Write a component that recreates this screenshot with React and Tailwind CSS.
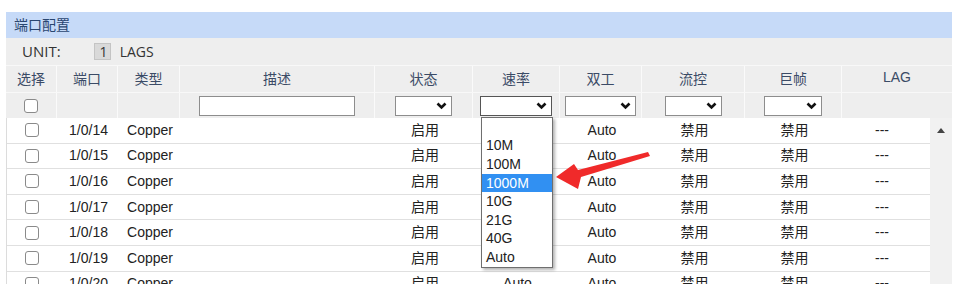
import React from "react";

const FONT = { fontFamily: '"Liberation Sans", "Noto Sans CJK SC", sans-serif' };
const HEAD_COLS = "51px 61px 62px 195px 98px 87px 82px 103px 97px 110px";
const BODY_COLS = "51px 61px 62px 195px 98px 87px 82px 103px 97px 88px";

function Check() {
  return <div className="w-[14px] h-[14px] rounded-[3px] border border-[#8a8a8a] bg-white" />;
}

function Chevron() {
  return (
    <svg width="11" height="8" viewBox="0 0 11 8" className="shrink-0">
      <polyline points="1.5,1.5 5.5,5.5 9.5,1.5" fill="none" stroke="#111" strokeWidth="2.6" />
    </svg>
  );
}

function Select({ w = 57, dark = false }) {
  return (
    <div
      className={`h-[20px] bg-white border flex items-center justify-end pr-[4px] ${dark ? "border-[#555]" : "border-[#8d8d8d]"}`}
      style={{ width: w }}
    >
      <Chevron />
    </div>
  );
}

const rows = ["1/0/14", "1/0/15", "1/0/16", "1/0/17", "1/0/18", "1/0/19", "1/0/20"];
const options = ["", "10M", "100M", "1000M", "10G", "21G", "40G", "Auto"];

export default function App() {
  return (
    <div className="w-[960px] h-[284px] overflow-hidden bg-white relative pt-[12px] pl-[6px]" style={FONT}>
      <div className="w-[946px]">
        {/* title */}
        <div className="h-[26px] bg-[#c6daf8] pl-[8px] flex items-center text-[14px] text-[#2a4670]">端口配置</div>
        {/* unit row */}
        <div className="h-[27px] bg-[#eeeeee] flex items-center pl-[16px] text-[15px] text-[#333]" style={{ fontFamily: '"Open Sans", "Liberation Sans", sans-serif' }}>
          <span>UNIT:</span>
          <span className="ml-[33px] w-[17px] h-[17px] bg-[#d9d9d9] border border-[#c4c4c4] flex items-center justify-end pr-[2px] text-[14px] leading-none">1</span>
          <span className="ml-[9px] text-[14px]">LAGS</span>
        </div>
        {/* header row */}
        <div className="grid h-[27px] bg-[#eeeeee] border-t border-[#f8f8f8] text-[14px] text-[#3b4b66]" style={{ gridTemplateColumns: HEAD_COLS }}>
          {["选择", "端口", "类型", "描述", "状态", "速率", "双工", "流控", "巨帧", "LAG"].map((h, i) => (
            <div key={h} className={`flex items-center justify-center ${i < 9 ? "border-r border-[#fafafa]" : ""} ${h === "LAG" ? "pb-[4px]" : ""}`}>
              {h}
            </div>
          ))}
        </div>
        {/* filter row */}
        <div className="grid h-[26px] bg-[#eeeeee] border-t border-[#f8f8f8]" style={{ gridTemplateColumns: HEAD_COLS }}>
          <div className="flex items-center justify-center border-r border-[#fafafa]"><Check /></div>
          <div className="border-r border-[#fafafa]" />
          <div className="border-r border-[#fafafa]" />
          <div className="flex items-center justify-center border-r border-[#fafafa]">
            <div className="w-[156px] h-[20px] bg-white border border-[#8d8d8d]" />
          </div>
          <div className="flex items-center justify-center border-r border-[#fafafa]"><Select /></div>
          <div className="flex items-center justify-center border-r border-[#fafafa] relative">
            <Select w={72} dark />
            <div className="absolute left-[8px] top-[24px] w-[72px] h-[151px] bg-white border border-[#6f6f6f] shadow-[2px_2px_3px_rgba(0,0,0,0.3)] z-10 text-[14px] text-[#222]">
              {options.map((o, i) => (
                <div
                  key={i}
                  className={`h-[18.6px] flex items-center pl-[4px] ${o === "1000M" ? "bg-[#3190f2] text-white" : ""}`}
                >
                  {o}
                </div>
              ))}
            </div>
          </div>
          <div className="flex items-center justify-center border-r border-[#fafafa]"><Select w={71} /></div>
          <div className="flex items-center justify-center border-r border-[#fafafa]"><Select /></div>
          <div className="flex items-center justify-center border-r border-[#fafafa]"><Select w={58} /></div>
          <div />
        </div>
        {/* body */}
        <div className="flex">
          <div className="w-[924px] border-l border-[#dcdcdc]">
            {rows.map((p, idx) => (
              <div key={p} className="grid h-[25.6px] border-b border-[#e0e0e0] text-[14px] text-[#222] bg-white" style={{ gridTemplateColumns: BODY_COLS }}>
                <div className="flex items-center justify-center -ml-[1px]"><Check /></div>
                <div className="flex items-center justify-center">{p}</div>
                <div className="flex items-center justify-center">Copper</div>
                <div />
                <div className="flex items-center justify-center">启用</div>
                <div className="flex items-center justify-center">{idx === 6 ? "Auto" : ""}</div>
                <div className="flex items-center justify-center">Auto</div>
                <div className="flex items-center justify-center">禁用</div>
                <div className="flex items-center justify-center">禁用</div>
                <div className="flex items-center justify-center pr-[10px]">---</div>
              </div>
            ))}
          </div>
          <div className="w-[22px] bg-[#f1f1f1] flex justify-center pt-[10px]">
            <svg width="8" height="5" viewBox="0 0 8 5"><polygon points="0,5 4,0 8,5" fill="#444" /></svg>
          </div>
        </div>
      </div>
      {/* red arrow annotation */}
      <svg className="absolute left-0 top-0 pointer-events-none" width="960" height="284" viewBox="0 0 960 284">
        <polygon
          points="556,177 574,164 578,170 648,152 650,156 581,177 578,189"
          fill="#f02a2a"
        />
      </svg>
    </div>
  );
}
